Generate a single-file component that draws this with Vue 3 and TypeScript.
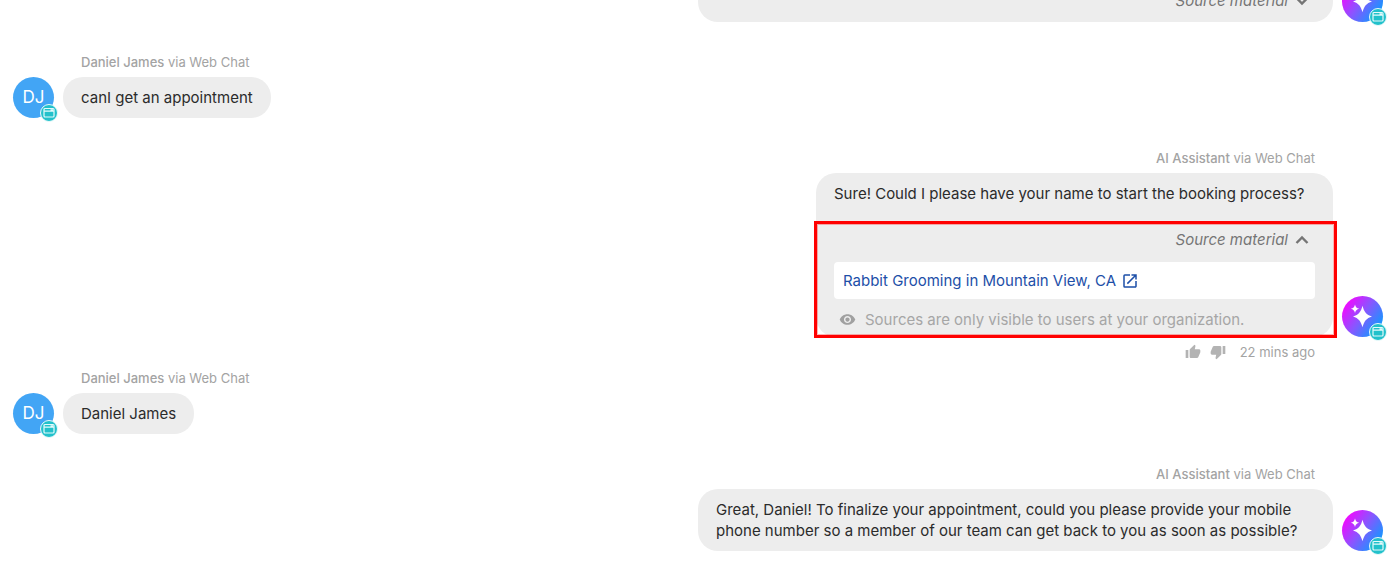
<script setup lang="ts">
interface Message {
  id: number
  author: string
  side: 'in' | 'out'
  text?: string
  sources?: 'open' | 'closed'
  time?: string
}

const messages: Message[] = [
  { id: 1, author: '', side: 'out', sources: 'closed' },
  { id: 2, author: 'Daniel James', side: 'in', text: 'canI get an appointment' },
  {
    id: 3,
    author: 'AI Assistant',
    side: 'out',
    text: 'Sure! Could I please have your name to start the booking process?',
    sources: 'open',
    time: '22 mins ago',
  },
  { id: 4, author: 'Daniel James', side: 'in', text: 'Daniel James' },
  {
    id: 5,
    author: 'AI Assistant',
    side: 'out',
    text: 'Great, Daniel! To finalize your appointment, could you please provide your mobile phone number so a member of our team can get back to you as soon as possible?',
  },
]
</script>

<template>
  <main class="thread">
    <article v-for="m in messages" :key="m.id" class="message" :class="m.side">
      <header v-if="m.author" class="label"><b>{{ m.author }}</b> via Web Chat</header>

      <div class="row">
        <div class="avatar">
          <span v-if="m.side === 'in'">DJ</span>
          <svg v-else class="sparkle" viewBox="0 0 41 41" aria-hidden="true">
            <path d="M20.500 9.700C22 15.500 24.300 18.800 30 20.500C24.300 22.200 22 25.500 20.500 31.300C19 25.500 16.700 22.200 11 20.500C16.700 18.800 19 15.500 20.500 9.700Z" />
            <path d="M13 8.500C13.700 11.200 14.600 12.100 17.200 12.800C14.600 13.500 13.700 14.400 13 17.100C12.300 14.400 11.400 13.500 8.800 12.800C11.400 12.100 12.300 11.200 13 8.500Z" />
          </svg>
          <span class="badge">
            <svg viewBox="0 0 12 12" aria-hidden="true">
              <rect x="1" y="1.500" width="10" height="8.500" rx="1" />
              <path d="M1 4.200H11M7.500 2.800H10" />
            </svg>
          </span>
        </div>

        <div class="bubble" :class="m.sources">
          <p v-if="m.text" class="text">{{ m.text }}</p>
          <section v-if="m.sources" class="sources">
            <button type="button" class="toggle" :aria-expanded="m.sources === 'open'">
              Source material
              <svg viewBox="0 0 14 10" aria-hidden="true">
                <path :d="m.sources === 'open' ? 'M1.5 8L7 2.500L12.500 8' : 'M1.500 2L7 7.500L12.500 2'" />
              </svg>
            </button>
            <template v-if="m.sources === 'open'">
              <a href="#" class="source-link">
                Rabbit Grooming in Mountain View, CA
                <svg viewBox="0 0 24 24" aria-hidden="true">
                  <path d="M19 19H5V5h7V3H5a2 2 0 0 0-2 2v14a2 2 0 0 0 2 2h14c1.100 0 2-.9 2-2v-7h-2v7zM14 3v2h3.590l-9.830 9.830 1.410 1.410L19 6.410V10h2V3h-7z" />
                </svg>
              </a>
              <p class="note">
                <svg viewBox="0 0 24 24" aria-hidden="true">
                  <path d="M12 4.500C7 4.500 2.730 7.610 1 12c1.730 4.390 6 7.500 11 7.500s9.270-3.110 11-7.500c-1.730-4.390-6-7.500-11-7.500zM12 17c-2.760 0-5-2.240-5-5s2.240-5 5-5 5 2.240 5 5-2.240 5-5 5zm0-8c-1.660 0-3 1.340-3 3s1.340 3 3 3 3-1.340 3-3-1.340-3-3-3z" />
                </svg>
                Sources are only visible to users at your organization.
              </p>
              <div class="highlight"></div>
            </template>
          </section>
        </div>
      </div>

      <footer v-if="m.time" class="meta">
        <button type="button" aria-label="Helpful">
          <svg viewBox="0 0 24 24" aria-hidden="true">
            <path d="M1 21h4V9H1v12zm22-11c0-1.100-.9-2-2-2h-6.310l.95-4.570.03-.32c0-.41-.17-.79-.44-1.060L14.170 1 7.590 7.590C7.220 7.950 7 8.450 7 9v10c0 1.100.9 2 2 2h9c.83 0 1.540-.5 1.840-1.220l3.020-7.050c.09-.23.14-.47.14-.73v-2z" />
          </svg>
        </button>
        <button type="button" aria-label="Not helpful">
          <svg viewBox="0 0 24 24" aria-hidden="true">
            <path d="M15 3H6c-.83 0-1.540.5-1.840 1.220l-3.020 7.050c-.09.23-.14.47-.14.73v2c0 1.100.9 2 2 2h6.310l-.95 4.570-.03.32c0 .41.17.79.44 1.060L9.830 23l6.590-6.590c.36-.36.58-.86.58-1.410V5c0-1.100-.9-2-2-2zm4 0v12h4V3h-4z" />
          </svg>
        </button>
        <time>{{ m.time }}</time>
      </footer>
    </article>
  </main>
</template>

<style>
body {
  margin: 0;
  background: #fff;
}
</style>

<style scoped>
.thread {
  box-sizing: border-box;
  height: 100vh;
  overflow: hidden;
  display: flex;
  flex-direction: column;
  justify-content: flex-end;
  gap: 30px;
  padding: 0 14px 18px 13px;
  font-family: Inter, "Liberation Sans", sans-serif;
  font-size: 15px;
  line-height: 21px;
  color: #2b2b2b;
}
.message {
  flex: none;
  display: flex;
  flex-direction: column;
  align-items: flex-start;
}
.message.out {
  align-items: flex-end;
}
.message:has(.meta) {
  margin-bottom: -24px;
}
.label {
  margin: 0 68px 5px;
  font-size: 13px;
  line-height: 20px;
  color: #a3a3a3;
}
.label b {
  font-weight: 500;
}
.row {
  display: flex;
  align-items: flex-end;
  gap: 9px;
}
.out .row {
  flex-direction: row-reverse;
}
.avatar {
  position: relative;
  flex: none;
  width: 41px;
  height: 41px;
  border-radius: 50%;
  display: flex;
  align-items: center;
  justify-content: center;
  font-size: 17px;
  color: #fff;
  background: #42a5f5;
}
.out .avatar {
  background: linear-gradient(125deg, #f0f 8%, #8a55ff 48%, #00a2ff 92%);
}
.sparkle {
  width: 41px;
  height: 41px;
  fill: #fff;
}
.badge {
  position: absolute;
  right: -4px;
  bottom: -4px;
  width: 16px;
  height: 16px;
  border: 1px solid #e9fafb;
  border-radius: 50%;
  background: #22c1cb;
  display: flex;
  align-items: center;
  justify-content: center;
}
.badge svg {
  width: 12px;
  height: 12px;
  fill: none;
  stroke: #e4fafb;
  stroke-width: 1.2;
}
.bubble {
  box-sizing: border-box;
  max-width: 635px;
  padding: 10px 18px;
  border-radius: 20px;
  background: #ededed;
}
.bubble.open {
  min-width: 517px;
  padding-bottom: 7px;
}
.bubble.closed {
  width: 635px;
  padding-bottom: 11px;
}
.text {
  margin: 0;
}
.sources {
  position: relative;
  display: flex;
  flex-direction: column;
}
.text + .sources {
  margin-top: 25px;
}
button {
  margin: 0;
  padding: 0;
  border: 0;
  background: none;
  color: inherit;
  font: inherit;
  cursor: pointer;
}
.toggle {
  align-self: flex-end;
  display: flex;
  align-items: center;
  gap: 7px;
  margin-right: 6px;
  font-style: italic;
  color: #757575;
}
.toggle svg {
  width: 14px;
  height: 10px;
  fill: none;
  stroke: #757575;
  stroke-width: 2.4;
}
.source-link {
  display: flex;
  align-items: center;
  gap: 5px;
  margin-top: 12px;
  padding: 8px 9px;
  border-radius: 4px;
  background: #fff;
  color: #1d4fa8;
  text-decoration: none;
}
.source-link svg {
  width: 18px;
  height: 18px;
  fill: #1d4fa8;
}
.note {
  display: flex;
  align-items: center;
  gap: 9px;
  margin: 10px 0 0;
  padding-left: 5px;
  color: #a6a6a6;
}
.note svg {
  width: 17px;
  height: 17px;
  fill: #a0a0a0;
}
.highlight {
  position: absolute;
  inset: -8px -22px -8px -20px;
  border: 3px solid #f00;
  box-shadow: inset 0 0 0 1px rgba(255, 0, 0, 0.3);
  pointer-events: none;
}
.meta {
  display: flex;
  align-items: center;
  gap: 9px;
  margin: 5px 68px 0;
  font-size: 13px;
  line-height: 20px;
  color: #a3a3a3;
}
.meta svg {
  display: block;
  width: 16px;
  height: 16px;
  fill: #b3b3b3;
}
.meta time {
  margin-left: 5px;
}
</style>
